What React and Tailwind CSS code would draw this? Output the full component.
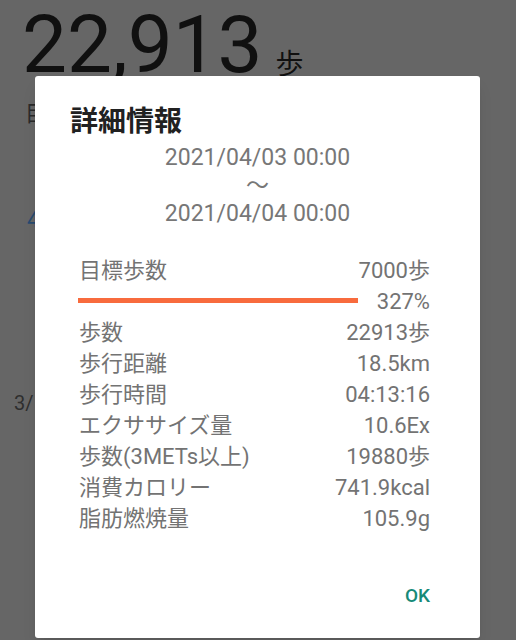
import React from 'react';

// 背景の画面（ダイアログの下に暗く見える部分）
const BackScreen = () => (
  <div className="w-[516px] h-[640px] bg-[#666666] overflow-hidden">
    <div className="flex items-end pl-[22px] pt-[2px]">
      <span className="text-[80px] leading-[86px] text-[#101010]">22,913</span>
      <span className="ml-[13px] mb-[6px] text-[28px] leading-[34px] text-[#101010]">歩</span>
    </div>
    <div className="pl-[25px] mt-[12px] text-[22px] leading-[28px] text-[#2a2a2a]">目標</div>
    <div className="pl-[27px] mt-[78px] text-[22px] leading-[28px] text-[#284a70]">4</div>
    <div className="pl-[14px] mt-[156px] text-[20px] leading-[26px] text-[#2e2e2e]">3/</div>
  </div>
);

const rows = [
  ["歩数", "22913歩"],
  ["歩行距離", "18.5km"],
  ["歩行時間", "04:13:16"],
  ["エクササイズ量", "10.6Ex"],
  ["歩数(3METs以上)", "19880歩"],
  ["消費カロリー", "741.9kcal"],
  ["脂肪燃焼量", "105.9g"],
];

const Row = ({ label, value }) => (
  <div className="flex justify-between h-[31px] leading-[31px]">
    <span>{label}</span>
    <span>{value}</span>
  </div>
);

export default function App() {
  return (
    <div
      className="relative w-[516px] h-[640px]"
      style={{ fontFamily: 'Roboto, "Noto Sans CJK JP", sans-serif' }}
    >
      <BackScreen />
      <div className="absolute left-[35px] top-[76px] w-[445px] h-[562px] bg-white rounded-[3px] shadow-lg flex flex-col">
        <div className="pl-[35px] pt-[28px] text-[28px] leading-[36px] font-bold text-[#212121]">詳細情報</div>
        <div className="mt-[4px] text-center text-[23px] leading-[28px] text-[#777777]">
          <div>2021/04/03 00:00</div>
          <div>〜</div>
          <div>2021/04/04 00:00</div>
        </div>
        <div className="mt-[27px] pl-[44px] pr-[50px] text-[22px] text-[#737373]">
          <Row label="目標歩数" value="7000歩" />
          <div className="flex items-center justify-between h-[31px] leading-[31px]">
            <div className="w-[280px] h-[5px] bg-[#f86b3d] -ml-[1px] -mt-[3px]" />
            <span>327%</span>
          </div>
          {rows.map(([l, v]) => (
            <Row key={l} label={l} value={v} />
          ))}
        </div>
        <div className="mt-auto mb-[30px] pr-[50px] flex justify-end">
          <span className="text-[19px] leading-[24px] font-medium text-[#168a78]">OK</span>
        </div>
      </div>
    </div>
  );
}
